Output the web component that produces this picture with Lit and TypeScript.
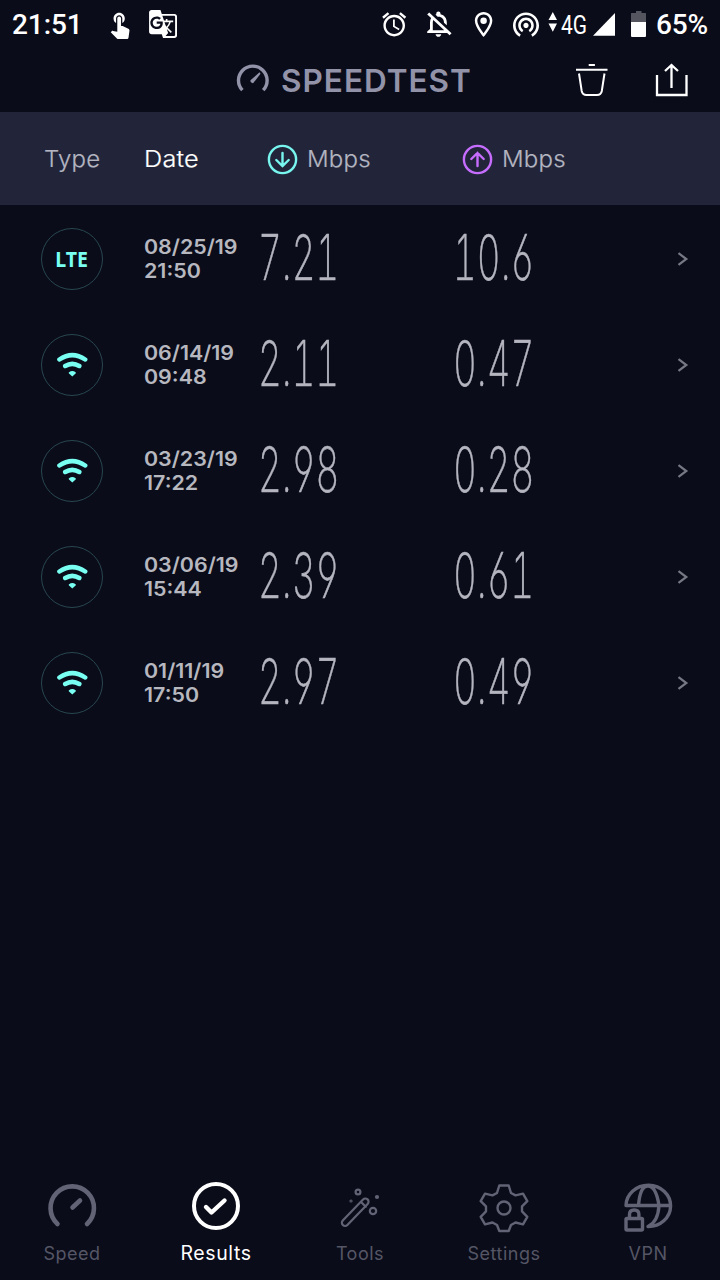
import { LitElement, html, css, svg } from "lit";
import { customElement } from "lit/decorators.js";

interface Result { type: "lte" | "wifi"; date: string; time: string; down: string; up: string; }

const RESULTS: Result[] = [
  { type: "lte", date: "08/25/19", time: "21:50", down: "7.21", up: "10.6" },
  { type: "wifi", date: "06/14/19", time: "09:48", down: "2.11", up: "0.47" },
  { type: "wifi", date: "03/23/19", time: "17:22", down: "2.98", up: "0.28" },
  { type: "wifi", date: "03/06/19", time: "15:44", down: "2.39", up: "0.61" },
  { type: "wifi", date: "01/11/19", time: "17:50", down: "2.97", up: "0.49" },
];

@customElement("status-bar")
class StatusBar extends LitElement {
  static styles = css`
    :host { display: flex; height: 50px; align-items: center; color: #fff; font-family: Roboto, sans-serif; font-weight: 500; }
    svg { display: block; flex: none; }
    .time { width: 94px; padding-left: 12px; font-size: 28px; line-height: 50px; letter-spacing: -.1px; }
    .spacer { flex: 1; }
    .net { width: 31px; padding-left: 1px; font-size: 25.5px; font-weight: 400; line-height: 48px; }
    .net span { display: inline-block; transform: scaleX(.82); transform-origin: 0 50%; }
    .pct { width: 64px; padding-left: 1px; font-size: 28px; line-height: 50px; white-space: nowrap; letter-spacing: -.2px; }
  `;
  render() {
    return html`
      <div class="time">21:51</div>
      <svg width="80" height="50" viewBox="106 0 80 50" fill="#fff">
        <path transform="translate(104.8 9) scale(1.25)" d="M9 11.24V7.5C9 6.12 10.12 5 11.5 5S14 6.12 14 7.5v3.74c1.21-.81 2-2.18 2-3.74C16 5.01 13.99 3 11.5 3S7 5.01 7 7.5c0 1.56.79 2.93 2 3.74zm9.84 4.63l-4.54-2.26c-.17-.07-.35-.11-.54-.11H13v-6c0-.83-.67-1.5-1.5-1.5S10 6.67 10 7.5v10.74l-3.43-.72c-.08-.01-.15-.03-.24-.03-.31 0-.59.13-.79.33l-.79.8 4.94 4.94c.27.27.65.44 1.06.44h6.79c.75 0 1.33-.55 1.44-1.28l.75-5.27c.01-.07.02-.14.02-.2 0-.62-.38-1.16-.91-1.38z"/>
        <path transform="translate(147.8 8.8) scale(1.27)" d="M21 4H11l-1-3H3c-1.1 0-2 .9-2 2v15c0 1.1.9 2 2 2h8l1 3h9c1.1 0 2-.9 2-2V6c0-1.1-.9-2-2-2zM7 16c-2.76 0-5-2.24-5-5s2.24-5 5-5c1.35 0 2.48.5 3.35 1.3L9.03 8.57c-.38-.36-1.04-.78-2.03-.78-1.74 0-3.15 1.44-3.15 3.21S5.26 14.21 7 14.21c2.01 0 2.84-1.44 2.92-2.41H7v-1.71h4.68c.07.31.12.61.12 1.02C11.8 13.97 9.89 16 7 16zm6.17-5.42h3.7c-.43 1.25-1.11 2.43-2.05 3.47-.31-.35-.6-.72-.86-1.1l-.79-2.37zm8.33 9.92c0 .55-.45 1-1 1H14l2-2.5-1.04-3.1 3.1 3.1.92-.92-3.3-3.25.02-.02c1.13-1.25 1.93-2.69 2.4-4.22H20v-1.3h-4.53V8h-1.29v1.29h-1.44L11.46 5.5h9.04c.55 0 1 .45 1 1v14z"/>
      </svg>
      <div class="spacer"></div>
      <svg width="180" height="50" viewBox="380 0 180 50" fill="#fff">
        <path transform="translate(379.8 10) scale(1.2)" d="M22 5.72l-4.6-3.86-1.29 1.53 4.6 3.86L22 5.72zM7.88 3.39L6.6 1.86 2 5.71l1.29 1.53 4.59-3.85zM12.5 8H11v6l4.75 2.85.75-1.23-4-2.37V8zM12 4c-4.97 0-9 4.03-9 9s4.02 9 9 9c4.97 0 9-4.03 9-9s-4.03-9-9-9zm0 16c-3.87 0-7-3.13-7-7s3.13-7 7-7 7 3.13 7 7-3.13 7-7 7z"/>
        <path transform="translate(421.600 8.200) scale(1.400 1.300)" d="M12 22c1.1 0 2-.9 2-2h-4c0 1.1.9 2 2 2zm0-15.5c2.49 0 4 2.02 4 4.5v.1l2 2V11c0-3.07-1.63-5.64-4.5-6.32V4c0-.83-.67-1.5-1.5-1.5s-1.5.67-1.5 1.5v.68c-.24.06-.47.15-.69.23l1.64 1.64c.18-.02.36-.05.55-.05zM5.41 3.35L4 4.76l2.81 2.81C6.29 8.57 6 9.74 6 11v5l-2 2v1h14.24l1.74 1.74 1.41-1.41L5.41 3.35zM16 17H8v-6c0-.68.12-1.32.34-1.9L16 16.76V17z"/>
        <g transform="translate(468.6 9.6) scale(1.25)"><path d="M12 2C8.13 2 5 5.13 5 9c0 5.25 7 13 7 13s7-7.75 7-13c0-3.87-3.13-7-7-7zM7 9c0-2.76 2.24-5 5-5s5 2.24 5 5c0 2.88-2.88 7.19-5 9.88C9.92 16.21 7 11.85 7 9z"/><circle cx="12" cy="9" r="2.6"/></g>
        <path transform="translate(510.4 8.5) scale(1.3)" d="M12 11c-1.1 0-2 .9-2 2s.9 2 2 2 2-.9 2-2-.9-2-2-2zm6 2c0-3.31-2.69-6-6-6s-6 2.69-6 6c0 2.22 1.21 4.15 3 5.19l1-1.74c-1.19-.7-2-1.97-2-3.45 0-2.21 1.79-4 4-4s4 1.79 4 4c0 1.48-.81 2.75-2 3.45l1 1.74c1.79-1.04 3-2.97 3-5.19zM12 3C6.48 3 2 7.48 2 13c0 3.7 2.01 6.92 4.99 8.65l1-1.73C5.61 18.53 4 15.96 4 13c0-4.42 3.58-8 8-8s8 3.58 8 8c0 2.96-1.61 5.53-4 6.92l1 1.73c2.99-1.73 5-4.95 5-8.65 0-5.52-4.48-10-10-10z"/>
        <path d="M548.5 20h8.5l-4.2-8zM548.5 23.5h8.5l-4.2 8.3z"/>
      </svg>
      <div class="net"><span>4G</span></div>
      <svg width="63" height="50" viewBox="592 0 63 50">
        <path d="M593 35.8L615 13v22.8z" fill="#fff"/>
        <path d="M632 13h4v-2h5.5v2h4q.5 0 .5.5v9h-15v-9q0-.5.5-.5z" fill="#54555f"/>
        <path d="M631 22h15v14q0 1-1 1h-13q-1 0-1-1z" fill="#fff"/>
      </svg>
      <div class="pct">65%</div>
    `;
  }
}

@customElement("title-bar")
class TitleBar extends LitElement {
  static styles = css`
    :host { display: flex; height: 62px; align-items: center; }
    svg { display: block; flex: none; }
    .gauge { margin-left: 232px; }
    .brand { flex: 1; padding-left: 9px; color: #9293a8; font: 600 31.5px/62px Inter, sans-serif; letter-spacing: 1px; }
  `;
  render() {
    return html`
      <svg class="gauge" width="40" height="62" viewBox="232 50 40 62" fill="none" stroke="#9293a8">
        <path d="M242.400 90.200A14.300 14.300 0 1 1 263.200 90.200" stroke-width="3.400"/>
        <path d="M259.500 72.300l1 1.500-7.200 9.300q-1.500.300-3-1.800 0-1.200 1-1.700z" fill="#9293a8" stroke="none"/>
      </svg>
      <div class="brand">SPEEDTEST</div>
      <svg width="150" height="62" viewBox="570 50 150 62" fill="none" stroke="#fff" stroke-width="2">
        <path d="M576 69.800h31.500M588.700 65h6.200"/>
        <path d="M579 73.500l2.700 17.500q.8 4 4.800 4h10.500q4 0 4.800-4l2.700-17.500"/>
        <path d="M657 75v20h29.500V75M671.500 88V66M665 71l6.500-6 6.500 6" stroke-width="2.300"/>
      </svg>
    `;
  }
}

@customElement("column-head")
class ColumnHead extends LitElement {
  static styles = css`
    :host { display: grid; grid-template-columns: 100px 123px 195px 1fr; box-sizing: border-box; height: 93px; padding: 0 0 0 44px; align-items: center;
      background: #222539; color: #b4b5c1; font: 300 23px/93px Inter, sans-serif; letter-spacing: .2px; }
    .label { display: inline-block; transform: scaleX(1.045); transform-origin: 0 50%; padding-top: 1px; -webkit-text-stroke: .2px currentColor; }
    .active { color: #fff; transform: scaleX(1.1); }
    .unit { display: flex; align-items: center; gap: 9px; }
    svg { display: block; }
  `;
  render() {
    const arrow = (color: string, d: string) => html`
      <svg width="31" height="31" viewBox="0 0 31 31" fill="none" stroke=${color} stroke-width="2.400" stroke-linecap="round">
        <circle cx="15.500" cy="15.500" r="13.600"/><path d=${d}/>
      </svg>`;
    return html`
      <div><span class="label">Type</span></div>
      <div><span class="label active">Date</span></div>
      <div class="unit">${arrow("#78f5ee", "M15.500 9v13M9.300 16l6.200 6 6.200-6")}<span class="label">Mbps</span></div>
      <div class="unit">${arrow("#c66dff", "M15.500 22V9M9.300 15l6.200-6 6.200 6")}<span class="label">Mbps</span></div>
    `;
  }
}

@customElement("result-row")
class ResultRow extends LitElement {
  static properties = { item: { attribute: false } };
  declare item: Result;
  static styles = css`
    :host { display: grid; grid-template-columns: 103px 115px 195px 223px 1fr; height: 106px; padding-left: 41px; align-items: center; }
    svg { display: block; }
    .badge { box-sizing: border-box; width: 62px; height: 62px; border-radius: 50%; border: 1.5px solid #28474f; display: grid; place-items: center; }
    .lte { color: #78fff2; font: 700 21px/24px "Noto Sans", sans-serif; display: block; transform: scaleX(.93); }
    .when { color: #b7b8bf; font: 600 20px/24px Inter, sans-serif; white-space: nowrap; padding-top: 1px; transform: scaleX(1.07); transform-origin: 0 50%; }
    .num { color: #b4b5bf; font: 200 62.5px/100px Inter, sans-serif; -webkit-text-stroke: .55px #b4b5bf; font-feature-settings: "tnum", "cv03", "cv04"; transform: scaleX(.59); transform-origin: 0 50%; white-space: nowrap; padding-bottom: 3px; margin-left: -1px; }
  `;
  render() {
    const r = this.item;
    return html`
      <div class="badge">${r.type === "lte" ? html`<span class="lte">LTE</span>` : html`
        <svg width="32" height="26" viewBox="56 351.500 32 26" fill="none" stroke="#78fff2" stroke-width="4.500" stroke-linecap="round">
          <path d="M59.400 359Q72.300 350.200 85.200 359M65.200 365.500Q72.300 361.200 79.300 365.500"/>
          <path d="M69 371.700q3.300-2.400 6.600 0 .7.700 0 1.400l-3.300 2.800-3.300-2.800q-.7-.7 0-1.400z" fill="#78fff2" stroke="none"/>
        </svg>`}</div>
      <div class="when">${r.date}<br>${r.time}</div>
      <div class="num">${r.down}</div>
      <div class="num">${r.up}</div>
      <svg width="12" height="16" viewBox="0 0 12 16" fill="none" stroke="#777884" stroke-width="2.200"><path d="M1.500 2.200L9.300 8 1.500 13.800"/></svg>
    `;
  }
}

@customElement("tab-bar")
class TabBar extends LitElement {
  static styles = css`
    :host { display: grid; grid-template-columns: repeat(5, 144px); height: 104px; color: #555665; font-family: Inter, sans-serif; }
    .tab { display: flex; flex-direction: column; align-items: center; }
    .label { font-size: 18px; line-height: 28px; letter-spacing: .5px; font-weight: 400; }
    .on { color: #fff; }
    .on .label { font-size: 19.5px; letter-spacing: .6px; line-height: 27px; }
    svg { display: block; }
  `;
  render() {
    const tab = (label: string, x: number, art: unknown, on = false) => html`
      <div class="tab ${on ? "on" : ""}">
        <svg width="56" height="64" viewBox="${x} 1176 56 64" fill="none" stroke=${on ? "#fff" : "#626375"} stroke-width="3" stroke-linecap="round" stroke-linejoin="round">${art}</svg>
        <div class="label">${label}</div>
      </div>`;
    return html`
      ${tab("Speed", 44, svg`<path d="M57.500 1224A21.700 21.700 0 1 1 87 1224M72.500 1207.500l7.500-7" stroke-width="4.600"/>`)}
      ${tab("Results", 188, svg`<circle cx="216" cy="1206" r="22" stroke-width="4"/><path d="M206 1207l5.500 5.500 13-12" stroke-width="4.400"/>`, true)}
      ${tab("Tools", 332, svg`<g stroke-width="2.200"><rect x="-17.800" y="-3.200" width="35.600" height="6.400" rx="3.200" transform="translate(355.200 1212.200) rotate(-46)"/><path d="M361.500 1202.500l4.300 4.300"/><circle cx="358" cy="1192" r="2.400"/><circle cx="373" cy="1211" r="3.200"/><circle cx="377" cy="1197" r="1"/><circle cx="351" cy="1201" r=".5"/></g>`)}
      ${tab("Settings", 476, svg`<g stroke-width="2.400"><path d="M499.300 1185.500h9.400l2.300 7.500 4.500 2.400 7.500-1.800 4.300 7.500-5.300 5.200v5l5.300 5.500-4.300 7.500-7.500-1.800-4.500 2.500-2.300 6h-9.400l-2.300-6-4.500-2.500-7.500 1.800-4.300-7.500 5.300-5.500v-5l-5.300-5.200 4.300-7.500 7.500 1.800 4.500-2.400z"/><circle cx="504" cy="1208" r="6.500"/></g>`)}
      ${tab("VPN", 620, svg`<g stroke-width="3.400"><path d="M626 1205.500A22.300 20.600 0 1 1 648 1226.500M626 1205.500h44M638.500 1205.500Q640 1186 648 1186T659 1205.500Q658 1222 648 1226.500"/><rect x="626" y="1218.500" width="16.500" height="11.500" rx="1"/><path d="M629.500 1218v-3.500q0-4.500 4.700-4.500t4.700 4.500v3.500"/></g>`)}
    `;
  }
}

@customElement("app-root")
class AppRoot extends LitElement {
  static styles = css`
    :host { display: flex; flex-direction: column; width: 720px; height: 1280px; overflow: hidden; background: #0a0c1a; }
    .list { flex: 1; padding-top: .5px; }
  `;
  render() {
    return html`
      <status-bar></status-bar>
      <title-bar></title-bar>
      <column-head></column-head>
      <div class="list">${RESULTS.map((r) => html`<result-row .item=${r}></result-row>`)}</div>
      <tab-bar></tab-bar>
    `;
  }
}
